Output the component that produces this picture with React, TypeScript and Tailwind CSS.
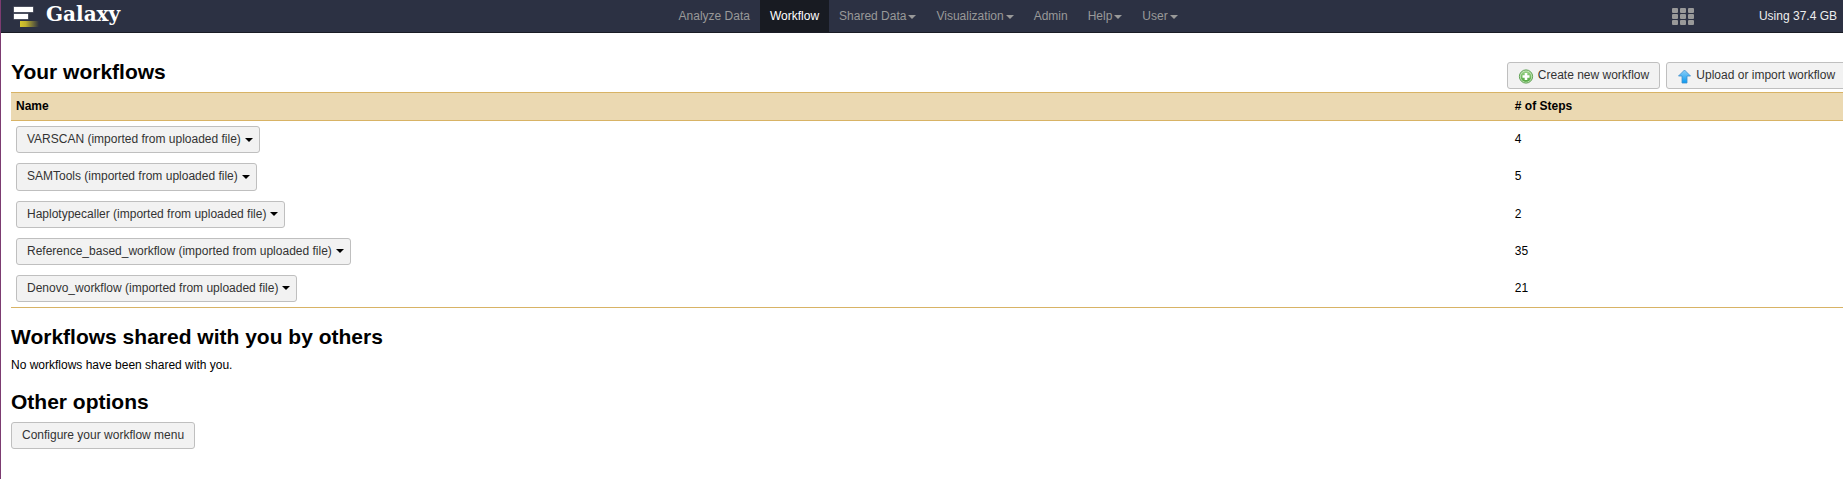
import React from "react";

const navItems = [
  { label: "Analyze Data" },
  { label: "Workflow", active: true },
  { label: "Shared Data", menu: true },
  { label: "Visualization", menu: true },
  { label: "Admin" },
  { label: "Help", menu: true },
  { label: "User", menu: true },
];

const workflows = [
  { name: "VARSCAN (imported from uploaded file)", steps: 4 },
  { name: "SAMTools (imported from uploaded file)", steps: 5 },
  { name: "Haplotypecaller (imported from uploaded file)", steps: 2 },
  { name: "Reference_based_workflow (imported from uploaded file)", steps: 35 },
  { name: "Denovo_workflow (imported from uploaded file)", steps: 21 },
];

const buttonClass =
  "inline-flex shrink-0 items-center whitespace-nowrap rounded-[3px] border border-[#bfbfbf] bg-[#f2f2f2] py-1 text-[#333]";

function Caret({ className }: { className: string }) {
  return (
    <span
      className={`inline-block h-0 w-0 border-x-4 border-t-4 border-x-transparent align-middle ${className}`}
    />
  );
}

function Logo() {
  return (
    <svg className="mt-[6px] ml-[12px] h-[22px] w-[28px] shrink-0" viewBox="0 0 28 22">
      <defs>
        <linearGradient id="tail" x1="0" x2="1">
          <stop offset="0" stopColor="#d6c62c" />
          <stop offset="0.3" stopColor="#c0b22e" />
          <stop offset="1" stopColor="#2c3143" />
        </linearGradient>
      </defs>
      <rect x="0.500" y="0.500" width="20" height="6" fill="#6d707d" />
      <rect x="0.500" y="7.500" width="15" height="6" fill="#6d707d" />
      <rect x="1" y="1" width="19" height="5" fill="#fff" />
      <rect x="1" y="8" width="14" height="5" fill="#fff" />
      <rect x="7" y="15" width="19" height="6" fill="url(#tail)" />
    </svg>
  );
}

function AddIcon() {
  return (
    <svg className="mt-[2px] h-4 w-4" viewBox="0 0 16 16">
      <defs>
        <linearGradient id="green" x2="0" y2="1">
          <stop offset="0" stopColor="#9bd28a" />
          <stop offset="1" stopColor="#4fa63d" />
        </linearGradient>
      </defs>
      <circle cx="8" cy="7.500" r="6.6" fill="#c5e6bb" stroke="#5c9f50" />
      <circle cx="8" cy="7.500" r="5.3" fill="url(#green)" />
      <path d="M6.700 4h2.600v2.200h2.200v2.600H9.300v2.200H6.700v-2.200H4.500v-2.600h2.200z" fill="#fff" />
    </svg>
  );
}

function UploadIcon() {
  return (
    <svg className="mt-[2px] h-4 w-4" viewBox="0 0 16 16">
      <defs>
        <linearGradient id="blue" x2="0" y2="1">
          <stop offset="0" stopColor="#8fd0f8" />
          <stop offset="1" stopColor="#0b9af0" />
        </linearGradient>
      </defs>
      <path
        d="M7.500 1L13.500 7H10V14H5V7H1.500z"
        fill="url(#blue)"
        stroke="#3e8fce"
        strokeWidth="0.8"
        strokeLinejoin="round"
      />
    </svg>
  );
}

export default function App() {
  return (
    <div className="h-[479px] w-full overflow-hidden border-l border-[#7c3b71] bg-white font-['Liberation_Sans',Arial,sans-serif] text-[12px] leading-[17.14px] text-black">
      <header className="flex h-[33px] border-b border-[#1a1c25] bg-[#2c3143]">
        <div className="flex w-[667.6px] shrink-0">
          <Logo />
          <span className="ml-[5px] pt-px font-['DejaVu_Serif',serif] text-[20px] leading-[27px] font-bold text-white">
            Galaxy
          </span>
        </div>
        <nav className="flex text-[#999]">
          {navItems.map((item) => (
            <a
              key={item.label}
              className={
                item.active
                  ? "block bg-[#181b22] px-[10px] pt-[8px] whitespace-nowrap text-white"
                  : "block px-[10px] pt-[8px] whitespace-nowrap"
              }
            >
              {item.label}
              {item.menu && <Caret className="ml-[2px] border-t-[#999]" />}
            </a>
          ))}
        </nav>
        <div className="ml-auto flex">
          <div className="mt-2 mr-[65px] grid h-[17px] w-[22px] grid-cols-3 grid-rows-3 gap-x-[2px] gap-y-[1px]">
            {Array.from({ length: 9 }, (_, i) => (
              <span key={i} className="rounded-[1px] bg-[#999]" />
            ))}
          </div>
          <span className="mr-[6px] pt-[8px] whitespace-nowrap text-[#eee]">Using 37.4 GB</span>
        </div>
      </header>

      <main className="pl-[10px]">
        <div className="flex h-[59px]">
          <h2 className="w-[1496px] shrink-0 pt-[27px] text-[21px] leading-[23px] font-bold">
            Your workflows
          </h2>
          <div className="flex items-start gap-[6px] pt-[29px]">
            <button className={`${buttonClass} h-[27px] gap-[3.8px] px-[10px]`}>
              <AddIcon />
              Create new workflow
            </button>
            <button className={`${buttonClass} h-[27px] gap-[3.2px] px-[10px]`}>
              <UploadIcon />
              Upload or import workflow
            </button>
          </div>
        </div>

        <section className="border-y border-[#d8b365]">
          <div className="flex h-[28px] border-b border-[#d8b365] bg-[#ebd9b2] pt-[5px] pl-[5px] font-bold">
            <span className="w-[1498.8px] shrink-0">Name</span>
            <span># of Steps</span>
          </div>
          {workflows.map((w) => (
            <div key={w.name} className="flex pt-[5.3px] pb-[4.7px] pl-[5px]">
              <div className="flex w-[1498.8px] shrink-0">
                <button className={`${buttonClass} pr-[6px] pl-[10px]`}>
                  {w.name}
                  <Caret className="ml-[4px] border-t-black" />
                </button>
              </div>
              <span className="pt-[5px]">{w.steps}</span>
            </div>
          ))}
        </section>

        <h2 className="mt-[17px] text-[21px] leading-[23px] font-bold">
          Workflows shared with you by others
        </h2>
        <p className="mt-[9px]">No workflows have been shared with you.</p>
        <h2 className="mt-[16px] text-[21px] leading-[23px] font-bold">Other options</h2>
        <button className={`${buttonClass} mt-[9px] px-[10px]`}>Configure your workflow menu</button>
      </main>
    </div>
  );
}
